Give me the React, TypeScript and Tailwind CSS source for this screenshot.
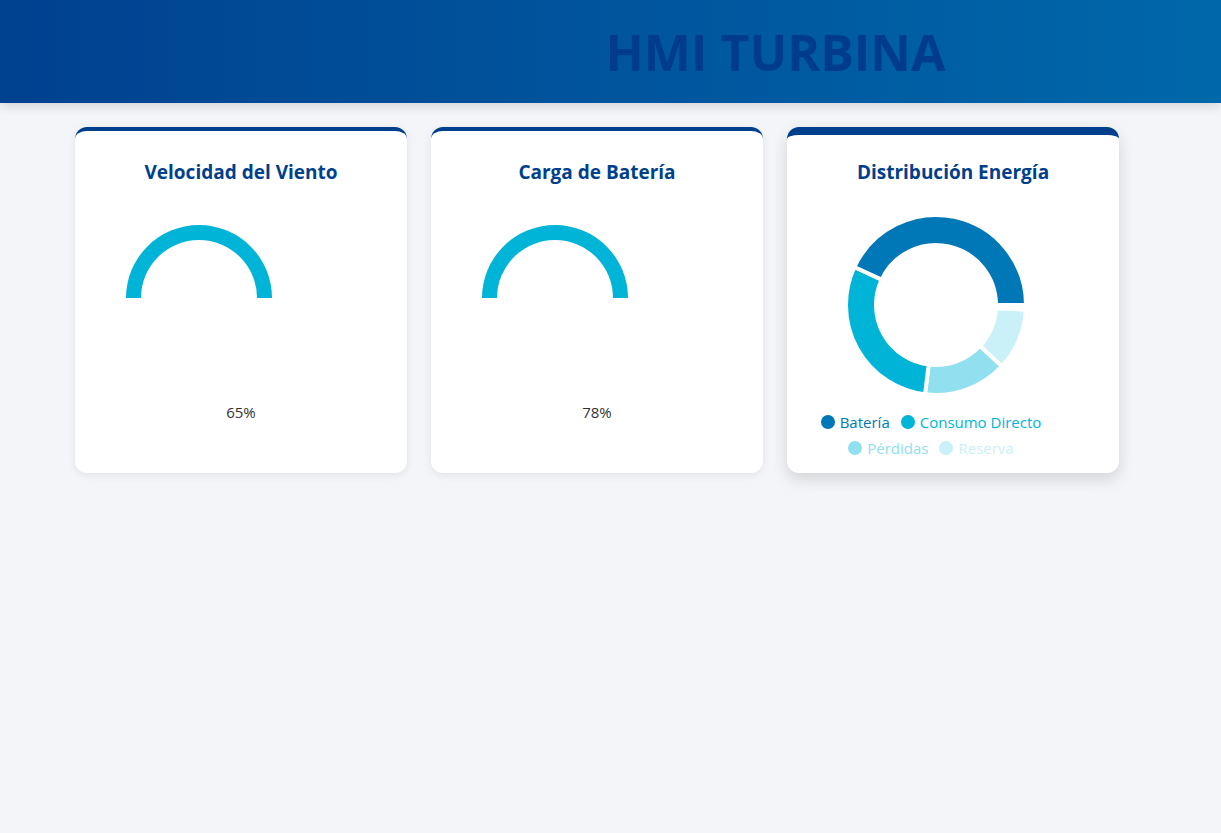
import React from "react";

const font = { fontFamily: '"Open Sans", "Noto Sans", sans-serif' };

function arcPath(cx: number, cy: number, r0: number, r1: number, a0: number, a1: number) {
  const rad = (d: number) => (d * Math.PI) / 180;
  const p = (r: number, a: number) => [cx + r * Math.cos(rad(a)), cy + r * Math.sin(rad(a))];
  const [x1, y1] = p(r1, a0);
  const [x2, y2] = p(r1, a1);
  const [x3, y3] = p(r0, a1);
  const [x4, y4] = p(r0, a0);
  const large = a1 - a0 > 180 ? 1 : 0;
  return `M${x1} ${y1} A${r1} ${r1} 0 ${large} 1 ${x2} ${y2} L${x3} ${y3} A${r0} ${r0} 0 ${large} 0 ${x4} ${y4} Z`;
}

function Gauge() {
  return (
    <svg width="146" height="74" viewBox="0 0 146 74" className="block">
      <path d={arcPath(73, 73, 58, 73, 180, 360)} fill="#00b4d8" />
    </svg>
  );
}

function Donut() {
  const segs = [
    { a0: 3, a1: 43, c: "#caf0f8" },
    { a0: 43, a1: 97, c: "#90e0ef" },
    { a0: 97, a1: 205, c: "#00b4d8" },
    { a0: 205, a1: 360, c: "#0077b6" },
  ];
  return (
    <svg width="184" height="184" viewBox="0 0 184 184" className="block">
      {segs.map((s, i) => (
        <path key={i} d={arcPath(92, 92, 60, 90, s.a0, s.a1)} fill={s.c} stroke="#ffffff" strokeWidth="4" strokeLinejoin="miter" />
      ))}
    </svg>
  );
}

function LegendItem({ color, label }: { color: string; label: string }) {
  return (
    <div className="flex items-center gap-[5px]">
      <span className="w-[14px] h-[14px] rounded-full inline-block" style={{ backgroundColor: color }} />
      <span className="text-[15px] leading-[20px]" style={{ color }}>{label}</span>
    </div>
  );
}

function GaugeCard({ title, value }: { title: string; value: string }) {
  return (
    <div className="w-[332px] h-[346px] bg-white rounded-xl border-t-4 border-[#003f8c] shadow-[0_2px_8px_rgba(0,0,0,0.08)] flex flex-col">
      <h2 className="pt-[27px] text-center text-[19px] leading-[28px] font-bold text-[#003f8c]">{title}</h2>
      <div className="mt-[39px] ml-[51px]">
        <Gauge />
      </div>
      <div className="mt-[102px] text-center text-[15px] leading-[22px] text-[#333333]">{value}</div>
    </div>
  );
}

export default function App() {
  return (
    <div className="min-h-[833px] bg-[#f4f5f9]" style={font}>
      <header className="h-[103px] bg-gradient-to-r from-[#004190] to-[#0068aa] shadow-[0_4px_10px_rgba(0,0,0,0.12)] flex items-center justify-center pl-[330px]">
        <h1 className="text-[50px] font-bold text-[#003b8c] leading-none tracking-[0px]">HMI TURBINA</h1>
      </header>
      <main className="pt-[24px] px-[75px] flex gap-6">
        <GaugeCard title="Velocidad del Viento" value="65%" />
        <GaugeCard title="Carga de Batería" value="78%" />
        <div className="w-[332px] h-[346px] bg-white rounded-xl border-t-8 border-[#003f8c] shadow-[0_6px_16px_rgba(0,0,0,0.14)] flex flex-col">
          <h2 className="pt-[23px] text-center text-[19px] leading-[28px] font-bold text-[#003f8c]">Distribución Energía</h2>
          <div className="mt-[27px] ml-[57px]">
            <Donut />
          </div>
          <div className="mt-[15px] w-[288px] flex flex-col gap-[6px]">
            <div className="flex justify-center gap-[11px]">
              <LegendItem color="#0077b6" label="Batería" />
              <LegendItem color="#00b4d8" label="Consumo Directo" />
            </div>
            <div className="flex justify-center gap-[11px]">
              <LegendItem color="#90e0ef" label="Pérdidas" />
              <LegendItem color="#caf0f8" label="Reserva" />
            </div>
          </div>
        </div>
      </main>
    </div>
  );
}
